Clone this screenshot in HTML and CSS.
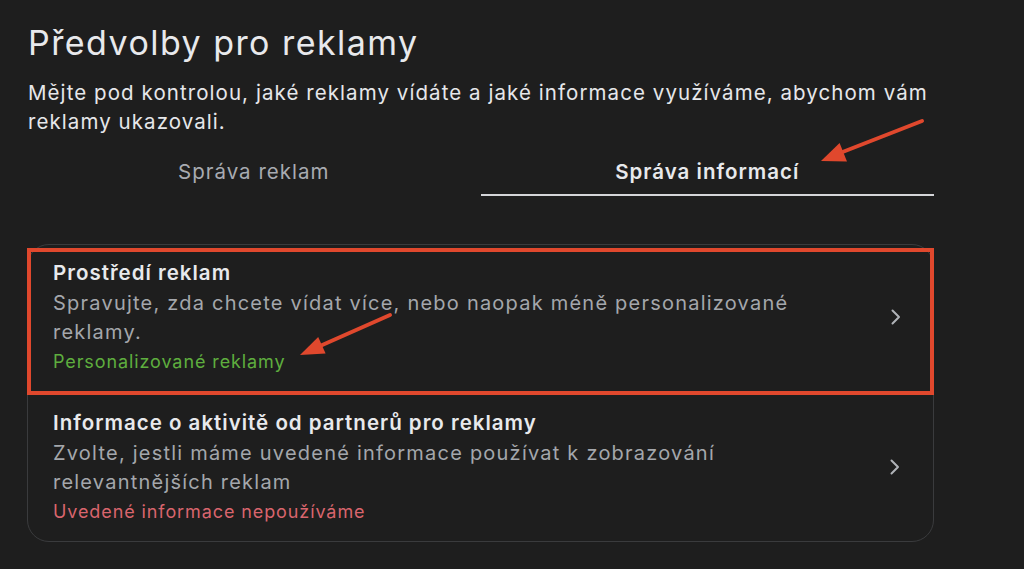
FILE: index.html
```html
<!DOCTYPE html>
<html lang="cs">
<head>
<meta charset="utf-8">
<title>Předvolby pro reklamy</title>
<link rel="stylesheet" href="styles.css">
</head>
<body>
<main class="page">
  <h1 class="title">Předvolby pro reklamy</h1>
  <p class="lead">Mějte pod kontrolou, jaké reklamy vídáte a jaké informace využíváme, abychom vám reklamy ukazovali.</p>
  <nav class="tabs">
    <div class="tab">Správa reklam</div>
    <div class="tab active">Správa informací</div>
  </nav>
  <section class="card">
    <div class="item highlight">
      <div class="item-text">
        <div class="item-title">Prostředí reklam</div>
        <div class="item-desc">Spravujte, zda chcete vídat více, nebo naopak méně personalizované reklamy.</div>
        <div class="item-status ok">Personalizované reklamy</div>
      </div>
      <svg class="chevron" width="12" height="18" viewBox="0 0 12 18"><path d="M2.5 2.5 L9 9 L2.5 15.5" fill="none" stroke="#b0b3b8" stroke-width="2" stroke-linecap="round" stroke-linejoin="round"/></svg>
    </div>
    <div class="item">
      <div class="item-text">
        <div class="item-title">Informace o aktivitě od partnerů pro reklamy</div>
        <div class="item-desc">Zvolte, jestli máme uvedené informace používat k zobrazování relevantnějších reklam</div>
        <div class="item-status off">Uvedené informace nepoužíváme</div>
      </div>
      <svg class="chevron" width="12" height="18" viewBox="0 0 12 18"><path d="M2.5 2.5 L9 9 L2.5 15.5" fill="none" stroke="#b0b3b8" stroke-width="2" stroke-linecap="round" stroke-linejoin="round"/></svg>
    </div>
  </section>
  <svg class="annotations" width="1024" height="569" viewBox="0 0 1024 569">
    <line x1="922" y1="121" x2="840" y2="153" stroke="#e0482d" stroke-width="4" stroke-linecap="round"/>
    <polygon points="821,161 847,161.5 839.6,142.9" fill="#e0482d"/>
    <line x1="390" y1="315" x2="320" y2="346" stroke="#e0482d" stroke-width="4" stroke-linecap="round"/>
    <polygon points="300,355 325.6,353.5 318.2,337.1" fill="#e0482d"/>
  </svg>
</main>
</body>
</html>
```
FILE: styles.css
```css
html, body {
  margin: 0;
  padding: 0;
  background: #1e1e1e;
}
body {
  font-family: Inter, "Noto Sans", "DejaVu Sans", sans-serif;
  color: #e4e6eb;
  letter-spacing: 0.05em;
}
.page {
  position: relative;
  width: 1024px;
  height: 569px;
  overflow: hidden;
  padding: 22px 90px 0 28px;
  box-sizing: border-box;
}
.title {
  margin: 0;
  font-size: 34px;
  line-height: 42px;
  font-weight: 400;
  letter-spacing: 1.45px;
  color: #e8e9ec;
}
.lead {
  margin: 14px 0 0;
  font-size: 20.5px;
  line-height: 29px;
  letter-spacing: 1.07px;
  color: #e6e7ea;
}
.tabs {
  display: flex;
  margin: 14px 0 0 -1px;
}
.tab {
  flex: 1;
  text-align: center;
  font-size: 20.5px;
  line-height: 24px;
  letter-spacing: 1px;
  padding: 10px 0 10px;
  color: #a8abb1;
  border-bottom: 2px solid transparent;
}
.tab.active {
  color: #e8e9ec;
  font-weight: 600;
  border-bottom-color: #d4d5d8;
}
.card {
  margin: 48px 0 0 -1px;
  border: 1px solid #3a3b3d;
  border-radius: 22px;
  padding-top: 3px;
}
.item {
  display: flex;
  align-items: center;
  padding: 12px 32px 15px 25px;
}
.item.highlight {
  margin: 0 -1px;
  border: 4px solid #e0482d;
  padding: 5px 28px 15px 22px;
}
.item-text {
  flex: 1;
  padding-right: 40px;
}
.item-title {
  font-size: 20.5px;
  line-height: 32px;
  font-weight: 600;
  letter-spacing: 1px;
  color: #e8e9ec;
}
.item-desc {
  font-size: 20px;
  line-height: 29px;
  letter-spacing: 1.22px;
  color: #a4a7ac;
}
.item-status {
  font-size: 18px;
  line-height: 29px;
  letter-spacing: 0.9px;
}
.item-status.ok { color: #5eae3e; }
.item-status.off { color: #d9656d; }
.chevron {
  flex: none;
  display: block;
}
.annotations {
  position: absolute;
  left: 0;
  top: 0;
  pointer-events: none;
}
```
